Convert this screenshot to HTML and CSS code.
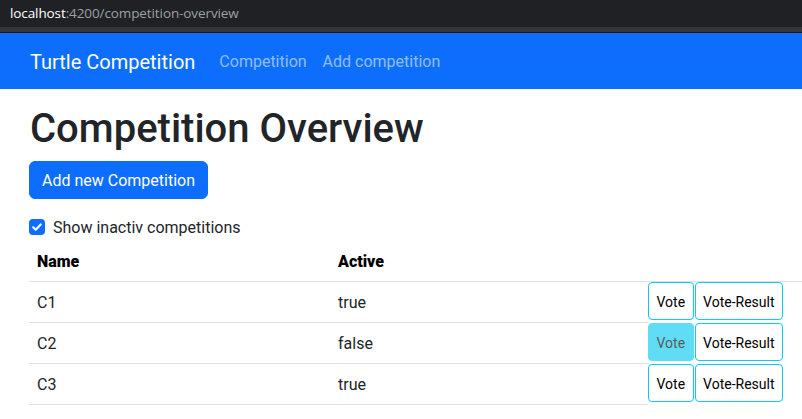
FILE: index.html
```html
<!DOCTYPE html>
<html lang="en">
<head>
<meta charset="utf-8">
<title>Competition Overview</title>
<link rel="stylesheet" href="styles.css">
</head>
<body>
<div class="chrome">
  <div class="url"><span class="host">localhost</span>:4200/competition-overview</div>
</div>
<div class="chrome-band"></div>
<nav class="navbar">
  <a class="brand" href="#">Turtle Competition</a>
  <a class="nav-link" href="#">Competition</a>
  <a class="nav-link" href="#">Add competition</a>
</nav>
<main class="content">
  <h1 class="title">Competition Overview</h1>
  <button class="btn-primary" type="button">Add new Competition</button>
  <label class="form-check">
    <span class="check-box">
      <svg viewBox="0 0 16 16" width="16" height="16"><path d="M4.2 8.3l2.5 2.4 5-5.2" fill="none" stroke="#fff" stroke-width="2.2" stroke-linecap="round" stroke-linejoin="round"/></svg>
    </span>
    <span class="check-label">Show inactiv competitions</span>
  </label>
  <table class="table">
    <thead>
      <tr><th class="c-name">Name</th><th class="c-active">Active</th><th class="c-actions"></th></tr>
    </thead>
    <tbody>
      <tr>
        <td>C1</td><td>true</td>
        <td class="actions"><div class="btn-group"><button class="btn-info" type="button">Vote</button><button class="btn-info" type="button">Vote-Result</button></div></td>
      </tr>
      <tr>
        <td>C2</td><td>false</td>
        <td class="actions"><div class="btn-group"><button class="btn-info disabled" type="button" disabled>Vote</button><button class="btn-info" type="button">Vote-Result</button></div></td>
      </tr>
      <tr>
        <td>C3</td><td>true</td>
        <td class="actions"><div class="btn-group"><button class="btn-info" type="button">Vote</button><button class="btn-info" type="button">Vote-Result</button></div></td>
      </tr>
    </tbody>
  </table>
</main>
</body>
</html>
```
FILE: styles.css
```css
* { box-sizing: border-box; }
html, body { margin: 0; padding: 0; }
body {
  font-family: Roboto, "Noto Sans", "Liberation Sans", sans-serif;
  font-size: 16px;
  line-height: 1.5;
  color: #212529;
  background: #fff;
  overflow: hidden;
}
.chrome {
  height: 27px;
  background: #202124;
  display: flex;
  align-items: center;
  padding-left: 10px;
}
.url {
  font-family: "Open Sans", "Noto Sans", sans-serif;
  font-size: 13.5px;
  color: #9aa0a6;
  letter-spacing: -0.1px;
}
.url .host { color: #fff; }
.chrome-band {
  height: 6px;
  background: #35363a;
  border-bottom: 1px solid #111214;
}
.navbar {
  height: 56px;
  background: #0d6efd;
  display: flex;
  align-items: center;
  padding: 2px 30px 0;
}
.brand {
  color: #fff;
  font-size: 20px;
  line-height: 30px;
  text-decoration: none;
  margin-right: 16px;
}
.nav-link {
  color: rgba(255, 255, 255, 0.55);
  text-decoration: none;
  padding: 8px;
  font-size: 16px;
}
.content {
  padding: 16px 0 0 29px;
}
.title {
  margin: 0 0 8px;
  font-size: 40px;
  font-weight: 500;
  line-height: 1.2;
  color: #212529;
  padding-left: 1px;
}
.btn-primary {
  display: block;
  font-family: inherit;
  font-size: 16px;
  line-height: 24px;
  color: #fff;
  background: #0d6efd;
  border: 1px solid #0d6efd;
  border-radius: 6px;
  padding: 7px 12px 5px;
  margin-bottom: 16px;
}
.form-check {
  display: flex;
  align-items: flex-start;
  height: 24px;
  margin-bottom: 2px;
}
.check-box {
  width: 16px;
  height: 16px;
  margin-top: 4px;
  margin-right: 8px;
  background: #0d6efd;
  border-radius: 4px;
  display: flex;
}
.check-label { line-height: 23px; padding-top: 1px; }
.table {
  width: 100%;
  border-collapse: collapse;
  color: #212529;
}
.table th {
  text-align: left;
  font-weight: 900;
  color: #000;
  padding: 9px 8px 7px;
  line-height: 24px;
  border-bottom: 1px solid #dee2e6;
}
.c-name { width: 301px; }
.c-active { width: 318px; }
.table td {
  padding: 9px 8px 7px;
  line-height: 24px;
  border-bottom: 1px solid #dee2e6;
  vertical-align: top;
}
.table td.actions {
  padding: 0;
  border-bottom: none;
}
.btn-group {
  display: flex;
  gap: 1px;
}
.btn-info {
  font-family: inherit;
  font-size: 14px;
  line-height: 21px;
  height: 38px;
  padding: 3px 7.5px 0;
  color: #000;
  background: #fff;
  border: 1px solid #0dcaf0;
  border-radius: 4px;
}
.btn-info.disabled {
  background: #0dcaf0;
  opacity: 0.65;
}
```
